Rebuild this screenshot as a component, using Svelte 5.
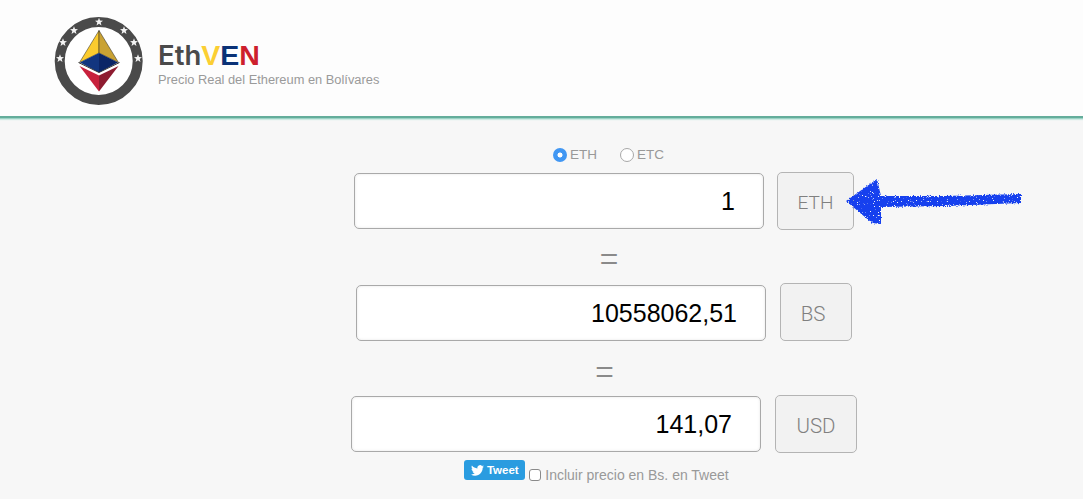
<script>
	const rows = [
		{ value: '1', unit: 'ETH', unitClass: 'eth' },
		{ value: '10558062,51', unit: 'BS', unitClass: 'bs' },
		{ value: '141,07', unit: 'USD', unitClass: 'usd' }
	];
	const stars = [
		[99, 21.5],
		[74, 30],
		[124, 30],
		[63, 42],
		[134, 42],
		[60, 58],
		[138, 58]
	];
	const star = (cx, cy, r = 4.2) => {
		const pts = [];
		for (let i = 0; i < 10; i++) {
			const a = (Math.PI / 5) * i - Math.PI / 2;
			const d = i % 2 ? r * 0.42 : r;
			pts.push(`${(cx + Math.cos(a) * d).toFixed(2)},${(cy + Math.sin(a) * d).toFixed(2)}`);
		}
		return pts.join(' ');
	};
</script>

<header class="header">
	<svg class="logo" width="90" height="90" viewBox="54 15.5 90 90" aria-hidden="true">
		<circle cx="98.7" cy="60.5" r="39" fill="#fff" stroke="#4a4a4a" stroke-width="10" />
		{#each stars as [x, y]}
			<polygon points={star(x, y)} fill="#f4f4f4" />
		{/each}
		<polygon points="99,30 79.5,62 99,52.500" fill="#fbcb2e" stroke="#222" stroke-width=".5" />
		<polygon points="99,30 118.5,62 99,52.500" fill="#c9a234" stroke="#222" stroke-width=".5" />
		<polygon points="99,52.500 80,62 99,72" fill="#12357f" />
		<polygon points="99,52.500 118,62 99,72" fill="#0b2566" />
		<polyline points="78.500,62 99,72 119.500,62" fill="none" stroke="#222" stroke-width=".9" />
		<polygon points="79.500,65.500 99,75 99,91" fill="#c8213d" />
		<polygon points="118.500,65.500 99,75 99,91" fill="#8e1c30" />
	</svg>
	<div class="brand">
		<h1><span class="eth-word">Eth</span><span class="v">V</span><span class="e">E</span><span class="n">N</span></h1>
		<p>Precio Real del Ethereum en Bolívares</p>
	</div>
</header>

<main class="main">
	<div class="coins">
		<label class="coin"><span class="radio on"></span>ETH</label>
		<label class="coin"><span class="radio"></span>ETC</label>
	</div>

	{#each rows as row, i}
		{#if i > 0}
			<div class={['equals', `equals-${i}`]}>=</div>
		{/if}
		<div class={['row', row.unitClass]}>
			<input class="amount" type="text" value={row.value} readonly />
			<div class="unit">{row.unit}</div>
			{#if i === 0}
				<svg class="arrow" width="180" height="54" viewBox="0 0 180 54" aria-hidden="true">
					<defs>
						<filter id="rough" x="-5%" y="-20%" width="110%" height="140%">
							<feTurbulence type="fractalNoise" baseFrequency="0.8" numOctaves="2" seed="4" result="noise" />
							<feDisplacementMap in="SourceGraphic" in2="noise" scale="4" xChannelSelector="R" yChannelSelector="G" result="shape" />
							<feColorMatrix
								in="noise"
								type="matrix"
								values="0 0 0 0 0  0 0 0 0 0  0 0 0 0 0  0 -14 0 0 10.500"
								result="grain"
							/>
							<feComposite in="shape" in2="grain" operator="in" />
						</filter>
					</defs>
					<polygon
						filter="url(#rough)"
						fill="#1440ee"
						points="0,27 31,5 35,22 100,22 175,20 175,29 100,32 35,33 35,50 26,49"
					/>
				</svg>
			{/if}
		</div>
	{/each}

	<div class="share">
		<a class="tweet" href="#tweet">
			<svg width="13" height="11" viewBox="0 0 24 20" aria-hidden="true">
				<path fill="#fff" d="M24 2.4c-.9.4-1.8.7-2.8.8 1-.6 1.8-1.6 2.2-2.7-1 .6-2 1-3.1 1.2A4.9 4.9 0 0 0 11.900 6.200C7.800 6 4.200 4 1.700.9c-1.300 2.200-.7 5.100 1.500 6.600-.8 0-1.600-.2-2.200-.6 0 2.400 1.700 4.400 3.900 4.900-.7.2-1.500.2-2.200.1.600 2 2.400 3.400 4.600 3.400A9.900 9.900 0 0 1 0 17.300 14 14 0 0 0 7.500 19.500c9.100 0 14.300-7.700 14-14.600 1-.7 1.800-1.500 2.500-2.500z" />
			</svg>
			Tweet
		</a>
		<label class="include"><input type="checkbox" />Incluir precio en Bs. en Tweet</label>
	</div>
</main>

<style>
	:global(body) {
		background: #f7f7f7;
		font-family: 'Liberation Sans', Arial, sans-serif;
		overflow: hidden;
	}

	.header {
		height: 116px;
		display: flex;
		align-items: center;
		gap: 14px;
		padding-left: 54px;
		background: #fdfdfd;
		border-bottom: 2px solid #64ad9b;
		box-shadow: 0 1px 0 #9ad3c5, 0 2px 1px #cfeae3;
	}

	.logo {
		flex: none;
		margin-top: 5px;
	}

	.brand {
		margin-top: 10px;
	}

	h1 {
		margin: 0;
		font-size: 28.5px;
		line-height: 30px;
		font-weight: 700;
		color: #4a4a4a;
	}

	.eth-word {
		font-family: Inter, sans-serif;
		font-size: 27.5px;
		font-weight: 600;
	}

	.v { color: #fbcf33; }
	.e { color: #0a3277; }
	.n { color: #cd1f2d; }

	.brand p {
		margin: 2px 0 0;
		font-size: 12.85px;
		line-height: 15px;
		color: #9a9a9a;
	}

	.main {
		padding: 29px 0 0 125px;
		display: flex;
		flex-direction: column;
		align-items: center;
	}

	.coins {
		display: flex;
		gap: 23px;
		height: 25px;
		align-items: flex-start;
		margin-left: 9px;
	}

	.coin {
		display: flex;
		align-items: center;
		gap: 3px;
		font-size: 13.5px;
		line-height: 16px;
		color: #999;
	}

	.radio {
		width: 14px;
		height: 14px;
		box-sizing: border-box;
		border-radius: 50%;
		border: 1px solid #a8a8a8;
		background: #fff;
	}

	.radio.on {
		border: 0;
		background: radial-gradient(circle, #fff 0 2.2px, #4197f3 2.8px);
	}

	.row {
		position: relative;
		display: flex;
		align-items: center;
		gap: 13px;
	}

	.amount {
		width: 410px;
		height: 56px;
		box-sizing: border-box;
		padding: 0 28px 0 10px;
		border: 1px solid #a9a9a9;
		border-radius: 5px;
		background: #fff;
		box-shadow: inset 0 0 3px #e4e4e4;
		font-family: inherit;
		font-size: 25px;
		color: #000;
		text-align: right;
		outline: none;
	}

	.unit {
		height: 58px;
		box-sizing: border-box;
		display: flex;
		align-items: center;
		justify-content: center;
		padding-top: 3px;
		border: 1px solid #b4b4b4;
		border-radius: 5px;
		background: #f2f2f2;
		font-family: Roboto, sans-serif;
		font-weight: 300;
		font-size: 20.5px;
		color: #808080;
	}

	.eth .unit {
		width: 77px;
		font-size: 19px;
	}

	.bs {
		gap: 14px;
		align-items: flex-end;
	}

	.bs .unit {
		width: 72px;
		padding-right: 6px;
	}

	.usd { gap: 14px; }
	.usd .unit { width: 82px; }

	.arrow {
		position: absolute;
		left: 492px;
		top: 2px;
	}

	.equals {
		box-sizing: border-box;
		display: flex;
		align-items: center;
		justify-content: center;
		font-family: Roboto, sans-serif;
		font-weight: 300;
		font-size: 38px;
		line-height: 1;
		color: #8a8a8a;
	}

	.equals-1 {
		height: 53px;
		padding-top: 5px;
		margin-left: 10px;
	}

	.equals-2 {
		height: 54px;
		padding-top: 7px;
		margin-left: 1px;
	}

	.share {
		display: flex;
		align-items: flex-start;
		gap: 4px;
		margin-top: 7px;
		margin-left: -15px;
	}

	.tweet {
		display: flex;
		align-items: center;
		justify-content: center;
		gap: 3px;
		width: 61px;
		height: 20px;
		border-radius: 3px;
		background: #2a9ce0;
		color: #fff;
		font-size: 11.5px;
		font-weight: 700;
		text-decoration: none;
	}

	.include {
		display: flex;
		align-items: center;
		gap: 4px;
		margin-top: 7px;
		font-size: 14px;
		line-height: 16px;
		color: #999;
	}

	.include input {
		appearance: none;
		margin: 0;
		width: 12px;
		height: 12px;
		box-sizing: border-box;
		border: 1px solid #8a8a8a;
		border-radius: 3px;
		background: #fff;
	}
</style>
